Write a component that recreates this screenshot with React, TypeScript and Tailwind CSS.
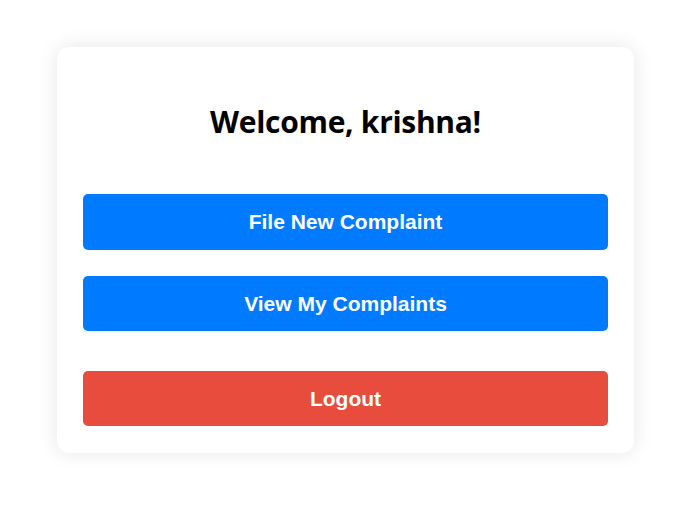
import React from "react";

const App: React.FC = () => {
  const username = "krishna";

  return (
    <div className="min-h-[520px] w-full bg-white pt-[47px]">
      <div className="ml-[57px] w-[577px] rounded-[12px] bg-white px-[26px] pt-[56px] pb-[27px] shadow-[0_0_20px_rgba(0,0,0,0.1)]">
        <h2 className="text-center font-['Open_Sans',sans-serif] text-[30px] font-bold leading-[38px] tracking-[-0.3px] text-black">
          Welcome, {username}!
        </h2>
        <div className="mt-[53px] flex flex-col">
          <button className="h-[56px] w-full rounded-[5px] bg-[#007bff] font-['Liberation_Sans',Arial,sans-serif] text-[21px] font-bold text-white">
            File New Complaint
          </button>
          <button className="mt-[26px] h-[55px] w-full rounded-[5px] bg-[#007bff] font-['Liberation_Sans',Arial,sans-serif] text-[21px] font-bold text-white">
            View My Complaints
          </button>
          <button className="mt-[40px] h-[55px] w-full rounded-[5px] bg-[#e74c3c] font-['Liberation_Sans',Arial,sans-serif] text-[21px] font-bold text-white">
            Logout
          </button>
        </div>
      </div>
    </div>
  );
};

export default App;
